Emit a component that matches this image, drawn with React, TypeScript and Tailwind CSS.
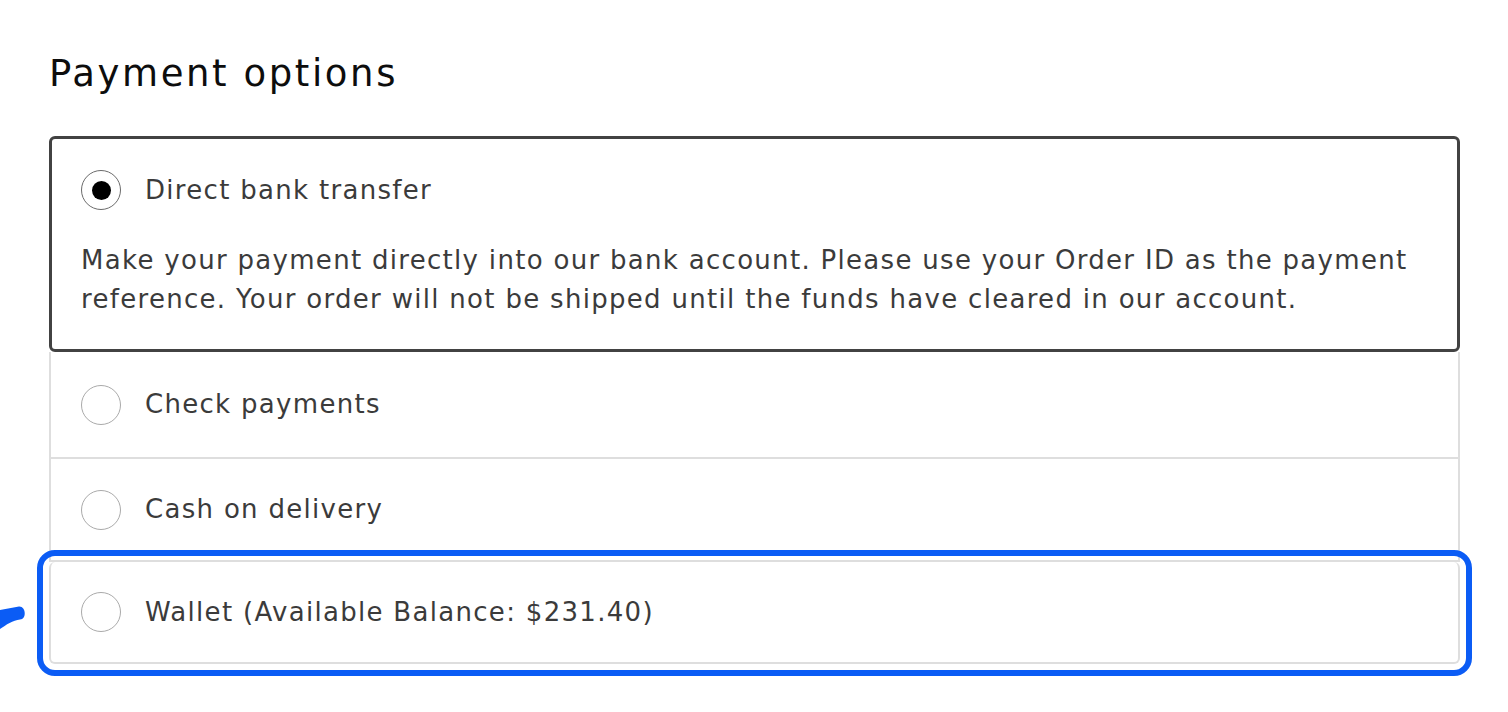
const Radio = ({ checked }: { checked?: boolean }) => {
  if (checked) {
    return (
      <span className="flex h-[40px] w-[40px] shrink-0 items-center justify-center rounded-full border-[1.5px] border-[#6b6b6b]">
        <span className="h-[19px] w-[19px] rounded-full bg-black" />
      </span>
    );
  }
  return <span className="h-[40px] w-[40px] shrink-0 rounded-full border-[1.5px] border-[#aaaaaa]" />;
};

const options = ['Check payments', 'Cash on delivery'];

export default function App() {
  return (
    <div
      className="relative min-h-[712px] w-[1508px] bg-white pl-[49px] pt-[51px] text-[#3b3b3b]"
      style={{ fontFamily: '"DejaVu Sans", "Liberation Sans", sans-serif' }}
    >
      <h2 className="text-[37px] leading-[46px] tracking-[2.6px] text-[#0d0d0d]">Payment options</h2>

      <div className="mt-[39px] w-[1411px]">
        <div className="rounded-[6px] border-[3px] border-[#424242] px-[29px] pb-[30px] pt-[31px]">
          <label className="flex items-center gap-[24px] text-[26px] tracking-[1.3px]">
            <Radio checked />
            <span>Direct bank transfer</span>
          </label>
          <p className="mt-[31px] text-[26px] leading-[39px] tracking-[1.3px]">
            Make your payment directly into our bank account. Please use your Order ID as the payment
            <br />
            reference. Your order will not be shipped until the funds have cleared in our account.
          </p>
        </div>

        {options.map((o, i) => (
          <label
            key={o}
            className={`flex items-center gap-[24px] border-x-2 border-b-2 border-[#dedede] px-[30px] text-[26px] tracking-[1.3px] ${
              i === 0 ? 'h-[107px]' : 'h-[103px]'
            }`}
          >
            <Radio />
            <span>{o}</span>
          </label>
        ))}

        <label className="flex h-[102px] items-center gap-[24px] rounded-[6px] border-x-2 border-b-2 border-[#dedede] px-[30px] text-[26px] tracking-[1.3px] [outline:6px_solid_#0b5cf5] [outline-offset:6px]">
          <Radio />
          <span>Wallet (Available Balance: $231.40)</span>
        </label>
      </div>

      <svg className="absolute left-0 top-[600px]" width="30" height="32" viewBox="0 0 30 32">
        <path d="M0 10 L19 6.5 C26 6 27 19.5 20 19.5 C13 20 6 25 0 29 Z" fill="#0b5cf5" />
      </svg>
    </div>
  );
}
